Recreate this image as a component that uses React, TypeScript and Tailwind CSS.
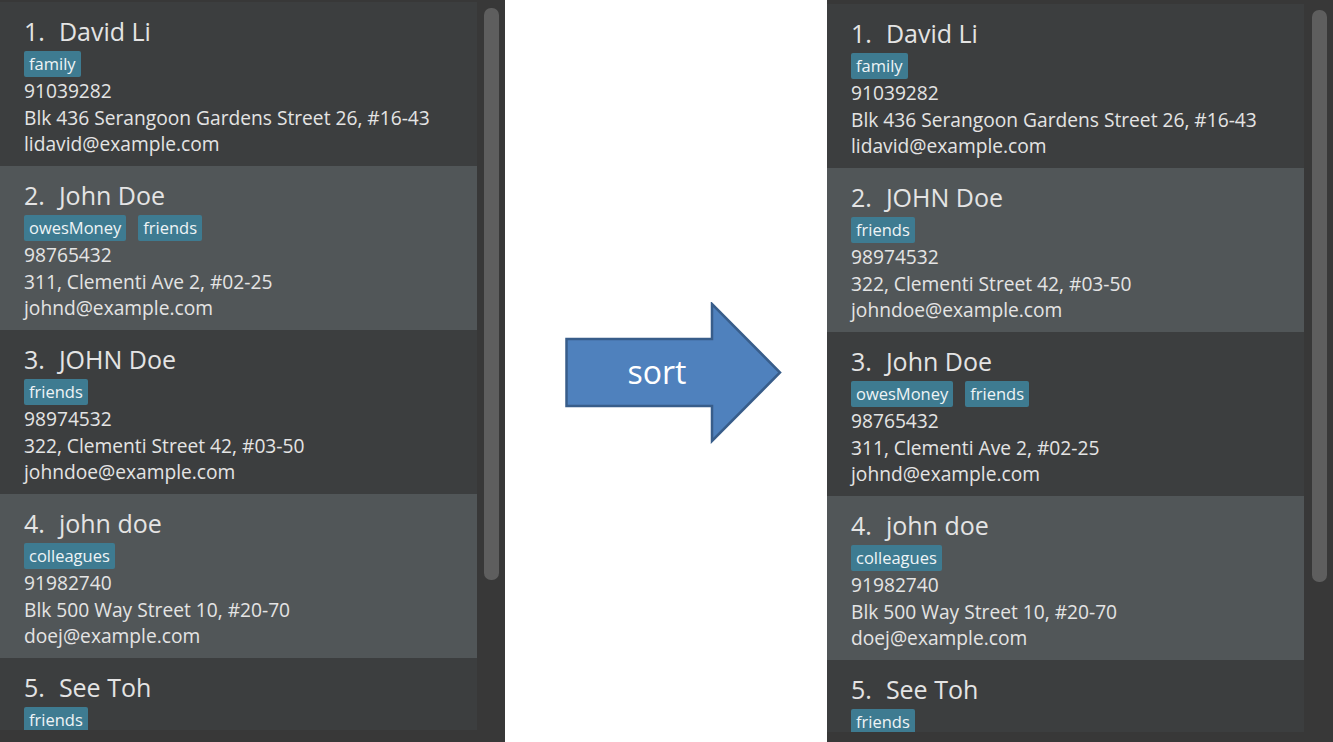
import React from "react";

type Person = {
  name: string;
  tags: string[];
  phone: string;
  address: string;
  email: string;
};

const left: Person[] = [
  { name: "David Li", tags: ["family"], phone: "91039282", address: "Blk 436 Serangoon Gardens Street 26, #16-43", email: "lidavid@example.com" },
  { name: "John Doe", tags: ["owesMoney", "friends"], phone: "98765432", address: "311, Clementi Ave 2, #02-25", email: "johnd@example.com" },
  { name: "JOHN Doe", tags: ["friends"], phone: "98974532", address: "322, Clementi Street 42, #03-50", email: "johndoe@example.com" },
  { name: "john doe", tags: ["colleagues"], phone: "91982740", address: "Blk 500 Way Street 10, #20-70", email: "doej@example.com" },
  { name: "See Toh", tags: ["friends"], phone: "", address: "", email: "" },
];

const right: Person[] = [left[0], left[2], left[1], left[3], left[4]];

function Card({ p, i }: { p: Person; i: number }) {
  const bg = i % 2 === 0 ? "bg-[#3c3e3f]" : "bg-[#515658]";
  return (
    <div className={`${bg} h-[164px] shrink-0 pl-[24px] pt-[15px] text-[#e4e4e4]`}>
      <div className="h-[28px] flex items-center text-[25px] leading-[28px]">
        <span>{i + 1}.</span>
        <span className="ml-[14px]">{p.name}</span>
      </div>
      <div className="mt-[6px] flex gap-[12px] h-[26px]">
        {p.tags.map((t) => (
          <span key={t} className="bg-[#3e7b91] rounded-[2px] px-[5px] h-[26px] flex items-center text-[16.5px] text-[#eef4f6]">
            {t}
          </span>
        ))}
      </div>
      <div className="mt-[1px] text-[19.2px] leading-[26.5px]">
        <div>{p.phone}</div>
        <div>{p.address}</div>
        <div>{p.email}</div>
      </div>
    </div>
  );
}

function Panel({ people, top, thumbTop }: { people: Person[]; top: string; thumbTop: string }) {
  return (
    <div className={`flex h-[742px] bg-[#383838] ${top}`}>
      <div className="flex flex-col w-[477px] h-[728px] overflow-hidden">
        {people.map((p, i) => (
          <Card key={i} p={p} i={i} />
        ))}
      </div>
      <div className="flex-1 flex justify-center pl-[1px]">
        <div className={`w-[15px] h-[572px] rounded-[7px] bg-[#5e5e5e] ${thumbTop}`} />
      </div>
    </div>
  );
}

export default function App() {
  return (
    <div
      className="flex w-[1333px] h-[742px] bg-white overflow-hidden"
      style={{ fontFamily: '"Open Sans", "Noto Sans", sans-serif' }}
    >
      <div className="w-[505px] shrink-0">
        <Panel people={left} top="pt-[2px]" thumbTop="mt-[6px]" />
      </div>
      <div className="w-[322px] shrink-0 flex items-center pl-[60px]">
        <div className="relative w-[218px] h-[142px] mt-[4px]">
          <svg width="218" height="142" viewBox="0 0 218 142">
            <polygon
              points="1.5,37 147,37 147,2 215,70.5 147,139 147,104 1.5,104"
              fill="#4f81bd"
              stroke="#385d8a"
              strokeWidth="2.5"
              strokeLinejoin="miter"
            />
          </svg>
          <div className="absolute left-[1px] top-[37px] w-[182px] h-[67px] flex items-center justify-center text-white text-[32px] leading-none pb-[2px]">
            sort
          </div>
        </div>
      </div>
      <div className="w-[506px] shrink-0">
        <Panel people={right} top="pt-[4px]" thumbTop="mt-[6px]" />
      </div>
    </div>
  );
}
